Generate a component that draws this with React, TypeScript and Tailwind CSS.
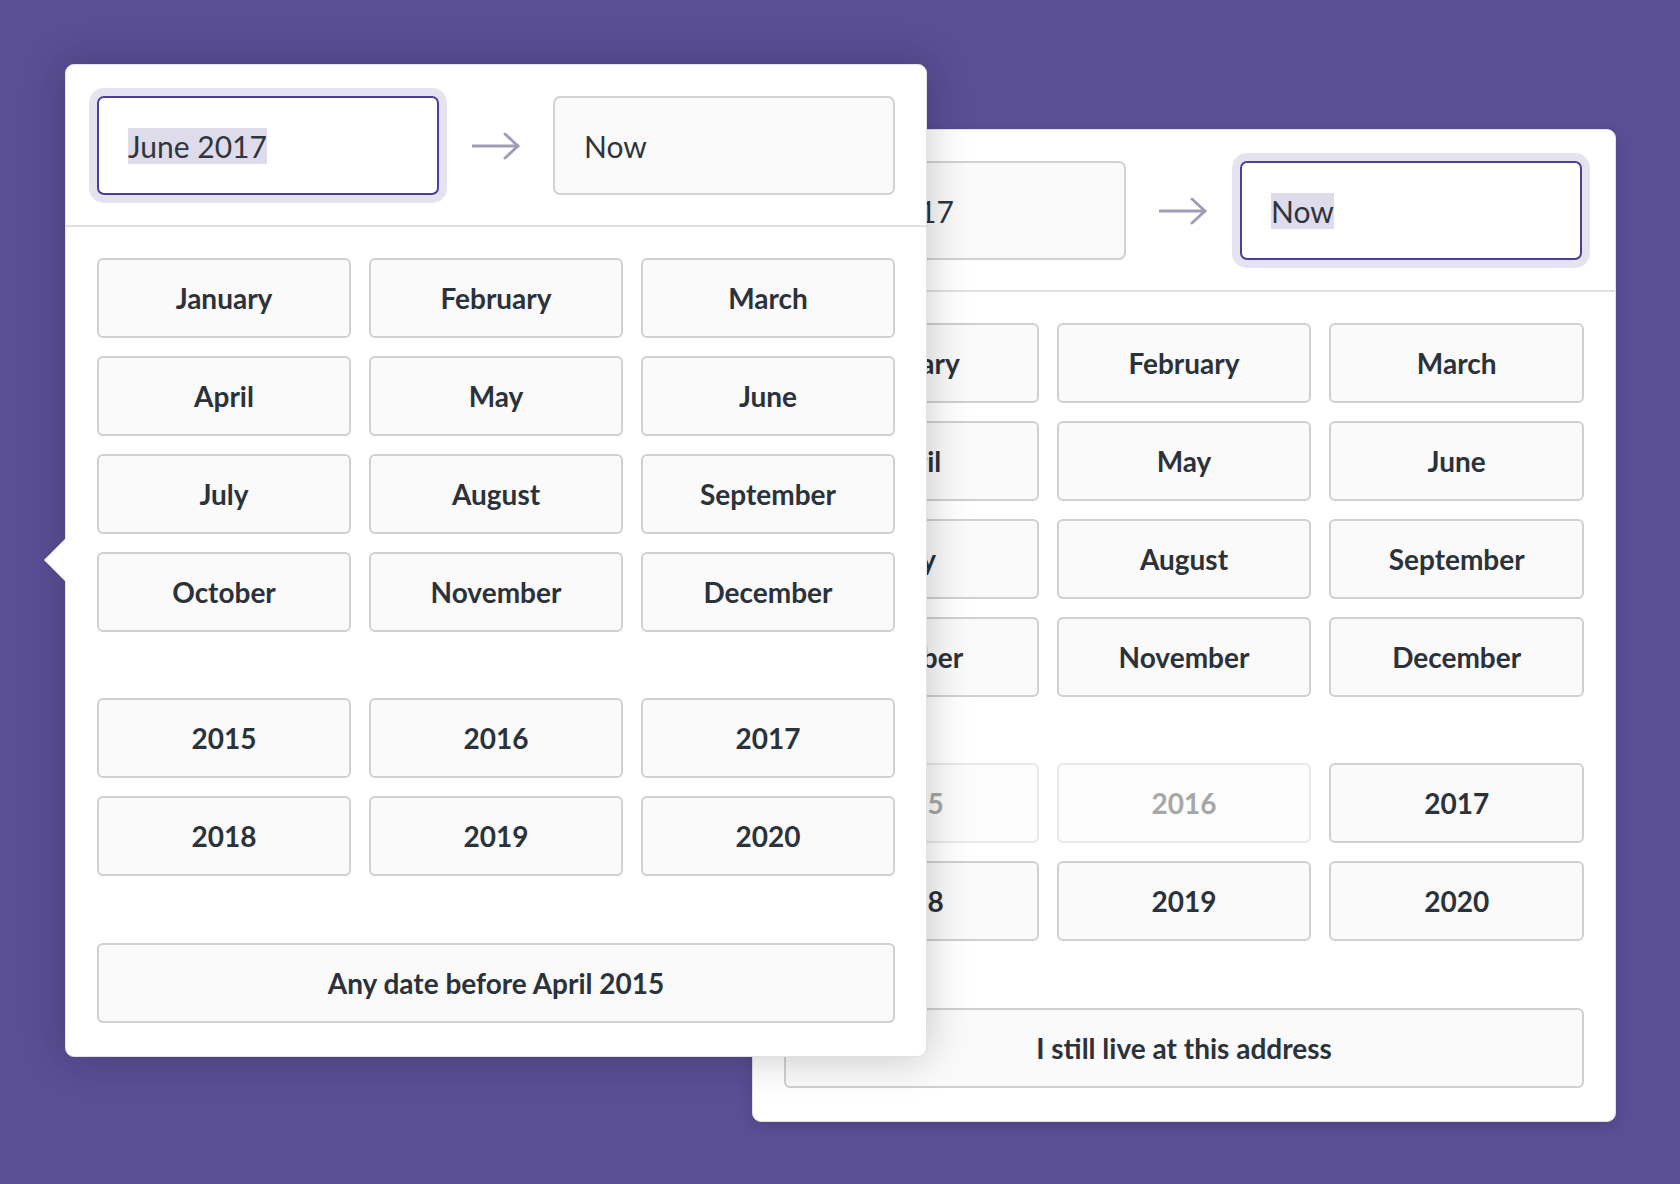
const MONTHS = [
  "January", "February", "March",
  "April", "May", "June",
  "July", "August", "September",
  "October", "November", "December",
];

const YEARS = [2015, 2016, 2017, 2018, 2019, 2020];

const Arrow = () => (
  <svg width="48" height="28" viewBox="0 0 48 28" fill="none">
    <path d="M1 14H46" stroke="#a19cb8" strokeWidth="3" strokeLinecap="round" />
    <path d="M33 2L46 14L33 26" stroke="#a19cb8" strokeWidth="3" strokeLinecap="round" strokeLinejoin="round" />
  </svg>
);

const DateInput = ({ value, focused }: { value: string; focused?: boolean }) => (
  <div
    className={
      focused
        ? "w-[342px] h-[99px] rounded-[7px] border-2 border-[#4b3f9b] bg-white flex items-center px-[29px] shadow-[0_0_0_8px_#e6e3f1]"
        : "w-[342px] h-[99px] rounded-[7px] border-2 border-[#d2d2d2] bg-[#fafafa] flex items-center px-[29px]"
    }
  >
    <span className={focused ? "bg-[#dedbea] text-[30px] leading-[36px] text-[#2e353d]" : "text-[30px] leading-[36px] text-[#2e353d]"}>
      {value}
    </span>
  </div>
);

const Btn = ({ label, disabled }: { label: string | number; disabled?: boolean }) => (
  <div
    className={
      disabled
        ? "h-[80px] rounded-[6px] border-2 border-[#e8e8e8] bg-[#fcfcfc] flex items-center justify-center text-[28px] font-bold text-[#a7a7a7]"
        : "h-[80px] rounded-[6px] border-2 border-[#d0d0d0] bg-[#fafafa] flex items-center justify-center text-[28px] font-bold text-[#2b323a]"
    }
  >
    {label}
  </div>
);

const Picker = ({
  focusEnd,
  disabledYears,
  footer,
}: {
  focusEnd?: boolean;
  disabledYears: number[];
  footer: string;
}) => (
  <div className="flex flex-col">
    <div className="flex items-center px-[31px] pt-[31px] pb-[30px]">
      <DateInput value="June 2017" focused={!focusEnd} />
      <div className="w-[114px] flex justify-center">
        <Arrow />
      </div>
      <DateInput value="Now" focused={focusEnd} />
    </div>
    <div className="h-[2px] bg-[#e0e0e0]" />
    <div className="px-[31px] pt-[31px] pb-[33px] flex flex-col">
      <div className="grid grid-cols-3 gap-[18px]">
        {MONTHS.map((m) => (
          <Btn key={m} label={m} />
        ))}
      </div>
      <div className="grid grid-cols-3 gap-[18px] mt-[66px]">
        {YEARS.map((y) => (
          <Btn key={y} label={y} disabled={disabledYears.includes(y)} />
        ))}
      </div>
      <div className="mt-[67px]">
        <Btn label={footer} />
      </div>
    </div>
  </div>
);

export default function App() {
  return (
    <div
      className="relative w-[1680px] h-[1184px] overflow-hidden bg-[#5a4e95]"
      style={{ fontFamily: "Lato, 'Noto Sans', sans-serif" }}
    >
      {/* back panel */}
      <div className="absolute left-[752px] top-[129px] w-[864px] rounded-[9px] bg-white border border-[#e2e2e2] shadow-[0_4px_14px_rgba(0,0,0,0.12)]">
        <Picker focusEnd disabledYears={[2015, 2016]} footer="I still live at this address" />
      </div>

      {/* front panel */}
      <div className="absolute left-[65px] top-[64px] w-[862px] rounded-[9px] bg-white border border-[#e2e2e2] shadow-[0_0_44px_rgba(0,0,0,0.22)]">
        <div className="absolute -left-[22px] top-[473px] w-0 h-0 border-y-[22px] border-y-transparent border-r-[22px] border-r-white" />
        <Picker disabledYears={[]} footer="Any date before April 2015" />
      </div>
    </div>
  );
}
